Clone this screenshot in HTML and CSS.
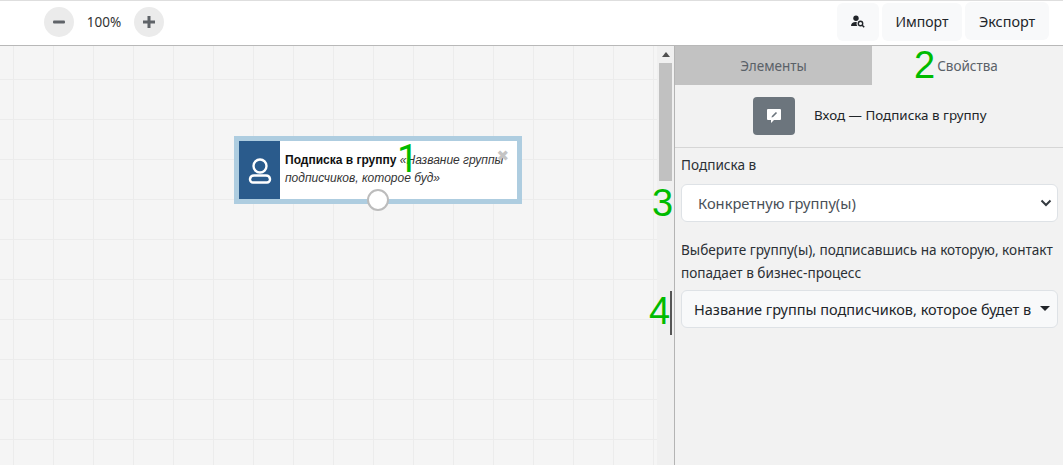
FILE: index.html
```html
<!DOCTYPE html>
<html lang="ru">
<head>
<meta charset="utf-8">
<title>Подписка в группу</title>
<link rel="stylesheet" href="styles.css">
</head>
<body>
<div class="page">
  <header class="topbar">
    <div class="zoom">
      <button class="round"><svg width="14" height="14" viewBox="0 0 14 14"><rect x="1" y="5.500" width="12" height="3" rx="1" fill="#5f6368"/></svg></button>
      <span class="zoom-value">100%</span>
      <button class="round"><svg width="14" height="14" viewBox="0 0 14 14"><path d="M5.500 1h3v4.500H13v3H8.500V13h-3V8.500H1v-3h4.500z" fill="#5f6368"/></svg></button>
    </div>
    <div class="actions">
      <button class="btn icon-btn"><svg width="14" height="13" viewBox="0 0 14 13"><circle cx="5" cy="3.200" r="2.700" fill="#212529"/><path d="M0 11c0-2.500 2-4 4.500-4 .6 0 1 .1 1.400.2-.6 1.300-.4 2.800.5 3.800z" fill="#212529"/><circle cx="9.500" cy="8.500" r="2.200" fill="none" stroke="#212529" stroke-width="1.400"/><path d="M11.200 10.200l2 2" stroke="#212529" stroke-width="1.500"/></svg></button>
      <button class="btn">Импорт</button>
      <button class="btn btn-last">Экспорт</button>
    </div>
  </header>
  <main class="main">
    <section class="canvas">
      <div class="node">
        <div class="node-icon"><svg class="person" width="24" height="26" viewBox="0 0 24 26" fill="none" stroke="#fff" stroke-width="2.400"><circle cx="12" cy="8" r="6.500"/><path d="M6 17.500h12a4 4 0 0 1 4 3.500v.5a3 3 0 0 1-3 3H5a3 3 0 0 1-3-3V21a4 4 0 0 1 4-3.500z"/></svg></div>
        <div class="node-text"><b>Подписка в группу</b> <i>«Название группы подписчиков, которое буд»</i></div>
        <span class="node-close">✖</span>
        <span class="node-port"></span>
      </div>
      <span class="mark mark-1">1</span>
      <span class="mark mark-3">3</span>
      <span class="mark mark-4">4</span>
      <span class="cursor"></span>
    </section>
    <div class="scrollbar">
      <span class="scroll-arrow"></span>
      <span class="scroll-thumb"></span>
    </div>
    <aside class="panel">
      <div class="tabs">
        <div class="tab tab-off">Элементы</div>
        <div class="tab tab-on"><span class="mark mark-2">2</span>Свойства</div>
      </div>
      <div class="panel-head">
        <span class="head-icon"><svg width="14" height="14" viewBox="0 0 14 14"><path d="M1 0h12a1 1 0 0 1 1 1v9a1 1 0 0 1-1 1H7l-3 3v-3H1a1 1 0 0 1-1-1V1a1 1 0 0 1 1-1z" fill="#fff"/><path d="M4.500 8.500l.4-1.600 4-4 1.200 1.200-4 4z" fill="#6c757d"/></svg></span>
        <span class="head-text">Вход — Подписка в группу</span>
      </div>
      <div class="form">
        <label class="label">Подписка в</label>
        <div class="select">
          <span>Конкретную группу(ы)</span>
          <svg width="12" height="8" viewBox="0 0 12 8" fill="none"><path d="M1.500 1.500L6 6l4.500-4.500" stroke="#343a40" stroke-width="2"/></svg>
        </div>
        <p class="hint">Выберите группу(ы), подписавшись на которую, контакт попадает в бизнес-процесс</p>
        <div class="dropdown">
          <span>Название группы подписчиков, которое будет в</span>
          <i class="caret"></i>
        </div>
      </div>
    </aside>
  </main>
</div>
</body>
</html>
```
FILE: styles.css
```css
* { box-sizing: border-box; }
html, body { margin: 0; height: 100%; }
body { font-family: "Noto Sans", sans-serif; color: #212529; overflow: hidden; }
.page { width: 1063px; height: 465px; display: flex; flex-direction: column; }
.topbar {
  height: 46px; display: flex; justify-content: space-between; align-items: center;
  background: #fff; border-top: 1px solid #dedede; border-bottom: 1px solid #b8b8b8;
  padding: 0 14px 0 44px;
}
.zoom { display: flex; align-items: center; margin-top: -3px; }
.round {
  width: 30px; height: 30px; border: 0; border-radius: 50%; background: #ebebeb; padding: 0;
  display: flex; align-items: center; justify-content: center;
}
.zoom-value { width: 60px; text-align: center; font-size: 13.500px; color: #333; }
.actions { display: flex; gap: 3px; align-items: center; margin-top: -3px; }
.btn {
  height: 38px; padding: 0 13.750px; border: 0; border-radius: 6px; background: #f8f9fa;
  font: 14px "Noto Sans", sans-serif; color: #212529;
}
.icon-btn { width: 42px; padding: 0; display: flex; align-items: center; justify-content: center; }
.btn-last { margin-top: -1px; font-size: 14.400px; }
.main { flex: 1; display: flex; min-height: 0; }
.canvas {
  position: relative; width: 657px; background-color: #f5f5f5;
  background-image:
    linear-gradient(to right, #ececec 1px, transparent 1px),
    linear-gradient(to bottom, #ececec 1px, transparent 1px);
  background-size: 40px 40px; background-position: 13px 33px;
}
.scrollbar { width: 17px; background: #f0f0f0; display: flex; flex-direction: column; align-items: center; padding-top: 6px; }
.scroll-arrow { width: 0; height: 0; border: 4px solid transparent; border-top: 0; border-bottom: 5px solid #505050; }
.scroll-thumb { width: 13px; height: 118px; background: #c1c1c1; margin-top: 6px; }
.panel { flex: 1; background: #f2f2f2; border-left: 1px solid #b4b4b4; display: flex; flex-direction: column; }
.tabs { display: flex; height: 39px; }
.tab { display: flex; align-items: center; justify-content: center; font-size: 13.500px; color: #5a6168; position: relative; }
.tab-off { background: #c2c2c2; width: 197px; }
.tab-on { flex: 1; }
.panel-head {
  height: 63px; display: flex; align-items: center; gap: 19px; padding: 0 0 1px 78px;
  border-bottom: 1px solid #d6d6d6; font-size: 13.400px; color: #212529;
}
.head-text { margin-top: -2px; }
.head-icon { width: 42px; height: 38px; border-radius: 4px; background: #6c757d; display: flex; align-items: center; justify-content: center; }
.form { padding: 0 5px 0 6px; }
.label { display: block; font-size: 13.600px; line-height: 18px; margin: 8px 0 10px; color: #2b3035; }
.select, .dropdown {
  height: 38px; display: flex; align-items: center; justify-content: space-between;
  border: 1px solid #dee2e6; border-radius: 6px;
}
.select { background: #fff; color: #495057; padding: 0 5px 0 16px; font-size: 14.700px; }
.hint { margin: 16px 0 6px; font-size: 13.600px; line-height: 23px; color: #2b3035; }
.dropdown { background: #f8f9fa; color: #212529; padding: 0 7px 0 12px; font-size: 14.500px; }
.caret { width: 0; height: 0; border: 5px solid transparent; border-bottom: 0; border-top: 5px solid #212529; margin-top: -2px; }
.node {
  position: absolute; left: 234px; top: 90px; width: 288px; height: 68px;
  border: 5px solid #aecde0; background: #fff; display: flex;
}
.node-icon { width: 41px; height: 58px; background: #2a5b8c; display: flex; align-items: center; justify-content: center; flex: none; }
.person { margin-top: 2px; }
.node-text { padding: 10px 10px 0 5px; font: 12px/18px "Liberation Sans", sans-serif; color: #111; }
.node-text i { color: #333; }
.node-close { position: absolute; right: 8px; top: 8px; font: 15px/15px "DejaVu Sans", sans-serif; color: #c4c4c4; }
.node-port {
  position: absolute; left: 128px; bottom: -12px; width: 22px; height: 22px; border-radius: 50%;
  background: #fff; border: 2px solid #bcbcbc;
}
.mark { position: absolute; font-family: "Liberation Sans", sans-serif; font-size: 38px; line-height: 38px; color: #00bb00; }
.mark-1 { left: 397px; top: 94px; font-family: Roboto, sans-serif; }
.mark-2 { left: 42px; top: 0; }
.mark-3 { left: 652px; top: 138px; }
.mark-4 { left: 649px; top: 246px; }
.cursor { position: absolute; left: 670px; top: 245px; width: 2px; height: 44px; background: #555; z-index: 2; }
```
